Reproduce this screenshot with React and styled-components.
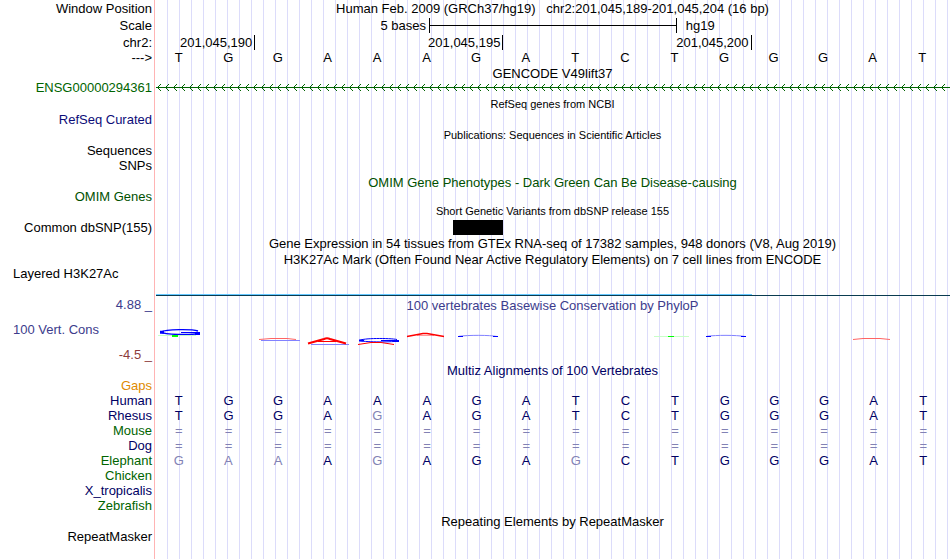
import React from "react";
import styled, { createGlobalStyle } from "styled-components";

const GlobalStyle = createGlobalStyle`
  body {
    margin: 0;
    background: #fff;
  }
`;

const Browser = styled.main`
  display: flex;
  flex-direction: column;
  min-height: 100vh;
  font-family: "Liberation Sans", Arial, Helvetica, sans-serif;
  font-size: 13px;
  line-height: 15px;
  color: #000;
  white-space: nowrap;
  /* left edge of the data area, then a guide line every 12px */
  background:
    linear-gradient(#ffb4b4, #ffb4b4) 154px 0 / 1px 100% no-repeat,
    linear-gradient(#fff, #fff) 0 0 / 156px 100% no-repeat,
    repeating-linear-gradient(
      to right,
      transparent 0 11px,
      #dcdcfa 11px 12px
    );
`;

const Track = styled.section`
  display: grid;
  grid-template-columns: 156px minmax(0, 1fr);
  align-content: center;
  align-items: center;
  height: ${({ $height }) => $height || 16}px;
`;

const Label = styled.div`
  padding-right: 4px;
  text-align: right;
  color: ${({ $color }) => $color || "#000"};
`;

const LeftLabel = styled(Label)`
  padding-left: 13px;
  text-align: left;
`;

const Title = styled.h2`
  grid-column: 2;
  margin: 0;
  padding-right: 1px;
  text-align: center;
  font-weight: normal;
  font-size: ${({ $small }) => ($small ? 11 : 13)}px;
  color: ${({ $color }) => $color || "#000"};
`;

const Position = styled(Title).attrs({ as: "h1" })`
  white-space: pre;
`;

const Scale = styled.div`
  display: grid;
  grid-template-columns: 273px 31.2% 1fr;
  align-items: center;
`;

const ScaleBar = styled.div`
  display: flex;
  align-items: center;
  height: 15px;
  border: solid #000;
  border-width: 0 1px;

  &::before {
    content: "";
    flex: 1;
    height: 1px;
    background: #000;
  }
`;

const ScaleText = styled.span`
  padding: 0 ${({ $end }) => ($end ? 9 : 3)}px;
  text-align: ${({ $end }) => ($end ? "left" : "right")};
`;

const Ruler = styled.div`
  display: grid;
  grid-template-columns: 2fr 5fr 5fr 4fr;
`;

const Tick = styled.span`
  padding-right: 2px;
  text-align: right;
  border-right: 1px solid #000;
`;

const Bases = styled.div`
  display: grid;
  grid-template-columns: repeat(16, 1fr);
  padding-right: 1px;
  text-align: center;

  span {
    padding-right: 4px;
  }
`;

const Drawing = styled.svg`
  display: block;
  width: 100%;
  height: ${({ $height }) => $height}px;
`;

const Variants = styled.div`
  display: grid;
  grid-template-columns: repeat(16, 1fr);
  padding-right: 1px;
`;

const Variant = styled.span`
  grid-column: 7;
  height: 15px;
  background: #000;
`;

const Signal = styled.div`
  display: flex;
  grid-column: 2;
  height: 2px;
  box-sizing: border-box;
  border-bottom: 1px solid #0a3c50;
`;

const SignalTrack = styled(Track)`
  align-content: end;
`;

const SignalArea = styled.div`
  width: 75%;
  background: #64c8ff;
`;

const Conservation = styled.section`
  display: grid;
  grid-template-columns: 156px minmax(0, 1fr);
  height: 67px;
`;

const Axis = styled.div`
  display: flex;
  flex-direction: column;
  gap: 10px;
  padding-top: 1px;
`;

const Plot = styled.div`
  display: flex;
  flex-direction: column;
  gap: 15px;
  padding-top: 2px;
`;

const Alignment = styled.table`
  width: 100%;
  table-layout: fixed;
  border-spacing: 0;
`;

const Species = styled.th`
  width: 152px;
  height: 15px;
  padding: 0 4px 0 0;
  text-align: right;
  font-weight: normal;
  color: ${({ $color }) => $color};
`;

const Base = styled.td`
  padding: 0 4px 0 0;
  text-align: center;
  color: ${({ $match }) => ($match ? "#000064" : "#8282b4")};
`;

const NAVY = "#000064";
const GREEN = "#006400";
const REFERENCE = "TGGAAAGATCTGGGAT";

const alignments = [
  { name: "Gaps", color: "#e08a00", bases: "" },
  { name: "Human", color: NAVY, bases: REFERENCE },
  { name: "Rhesus", color: NAVY, bases: "TGGAGAGATCTGGGAT" },
  { name: "Mouse", color: GREEN, bases: "================" },
  { name: "Dog", color: NAVY, bases: "================" },
  { name: "Elephant", color: GREEN, bases: "GAAAGAGAGCTGGGAT" },
  { name: "Chicken", color: GREEN, bases: "" },
  { name: "X_tropicalis", color: NAVY, bases: "" },
  { name: "Zebrafish", color: GREEN, bases: "" },
];

const GeneArrows = () => (
  <Drawing $height={7} aria-hidden="true">
    <defs>
      <pattern id="intron" width="8" height="7" patternUnits="userSpaceOnUse">
        <path
          d="M4 0h1v1h-1zM3 1h1v1h-1zM2 2h1v1h-1zM1 3h1v1h-1zM2 4h1v1h-1zM3 5h1v1h-1zM4 6h1v1h-1z"
          fill={GREEN}
        />
      </pattern>
    </defs>
    <rect width="100%" height="7" fill="url(#intron)" />
    <rect y="3" width="100%" height="1" fill={GREEN} />
  </Drawing>
);

const PhyloPLogo = () => (
  <Drawing
    $height={20}
    viewBox="0 0 794 20"
    preserveAspectRatio="none"
    fill="none"
    aria-hidden="true"
  >
    <g stroke="#00f">
      <path d="M42 3C36 1 10 1 5 4C8 7 36 7 42 5.5" strokeWidth="1.4" />
      <path d="M25 4.5H44" />
      <path d="M4 4.2H8M39 5.5H44" strokeWidth="3" />
      <path d="M241 11.5C234 10 206 10 204 12.5C206 14 234 14.5 242 13" />
      <path d="M225 12.5H243" />
      <path d="M203 12.5H208M237 13H243" strokeWidth="2" />
    </g>
    <g stroke="#8282ff">
      <path d="M105 12.5H144M155 16.5H193" />
      <path d="M303 8.3C312 7 334 7 341 8.5M551 8.3C560 7 580 7 589 8.5" />
    </g>
    <path d="M302 8.5H307M337 8.5H342M550 8.5H555M585 8.5H590" stroke="#00f" />
    <g stroke="#f00">
      <path d="M152 15.5L168 11C170 10 172 10 174 11L190 15.5" strokeWidth="2" />
      <path d="M162 13.5H180" />
      <path d="M202 16.5L215 14.5H225L238 16.5" />
      <path d="M251 8.5L267 5.5H271L288 8.5" strokeWidth="1.5" />
      <path d="M261 7.5H278" strokeOpacity="0.4" />
    </g>
    <g stroke="#ff6464">
      <path d="M103 11.5L115 10.5H131L140 11.5" />
      <path d="M697 11.5L707 10.5H724L734 11.5" />
    </g>
    <path d="M2 7.5H40M498 8.5H533" stroke="#c8ffc8" />
    <path d="M16 8H22" stroke="#0f0" strokeWidth="2" />
    <path d="M512 8.5H518" stroke="#0f0" />
  </Drawing>
);

const App = () => (
  <>
    <GlobalStyle />
    <Browser>
      <Track>
        <Label>Window Position</Label>
        <Position>
          {"Human Feb. 2009 (GRCh37/hg19)   chr2:201,045,189-201,045,204 (16 bp)"}
        </Position>
      </Track>
      <Track $height={18}>
        <Label>Scale</Label>
        <Scale>
          <ScaleText>5 bases</ScaleText>
          <ScaleBar />
          <ScaleText $end>hg19</ScaleText>
        </Scale>
      </Track>
      <Track>
        <Label>chr2:</Label>
        <Ruler>
          <Tick>201,045,190</Tick>
          <Tick>201,045,195</Tick>
          <Tick>201,045,200</Tick>
        </Ruler>
      </Track>
      <Track $height={15}>
        <Label>{"--->"}</Label>
        <Bases>
          {[...REFERENCE].map((base, index) => (
            <span key={index}>{base}</span>
          ))}
        </Bases>
      </Track>
      <Track>
        <Title>GENCODE V49lift37</Title>
      </Track>
      <Track $height={13}>
        <Label $color={GREEN}>ENSG00000294361</Label>
        <GeneArrows />
      </Track>
      <Track $height={20}>
        <Title $small>RefSeq genes from NCBI</Title>
      </Track>
      <Track $height={10}>
        <Label $color="#0c0c78">RefSeq Curated</Label>
      </Track>
      <Track $height={22}>
        <Title $small>Publications: Sequences in Scientific Articles</Title>
      </Track>
      <Track $height={9}>
        <Label>Sequences</Label>
      </Track>
      <Track $height={20}>
        <Label>SNPs</Label>
      </Track>
      <Track $height={15}>
        <Title $color="#005000">
          OMIM Gene Phenotypes - Dark Green Can Be Disease-causing
        </Title>
      </Track>
      <Track $height={13}>
        <Label $color="#005000">OMIM Genes</Label>
      </Track>
      <Track $height={17}>
        <Title $small>Short Genetic Variants from dbSNP release 155</Title>
      </Track>
      <Track $height={15}>
        <Label>Common dbSNP(155)</Label>
        <Variants>
          <Variant />
        </Variants>
      </Track>
      <Track $height={17}>
        <Title>
          Gene Expression in 54 tissues from GTEx RNA-seq of 17382 samples, 948
          donors (V8, Aug 2019)
        </Title>
      </Track>
      <Track $height={15}>
        <Title>
          H3K27Ac Mark (Often Found Near Active Regulatory Elements) on 7 cell
          lines from ENCODE
        </Title>
      </Track>
      <Track $height={13}>
        <LeftLabel>Layered H3K27Ac</LeftLabel>
      </Track>
      <SignalTrack>
        <Signal>
          <SignalArea />
        </Signal>
      </SignalTrack>
      <Conservation>
        <Axis>
          <Label $color="#3c3c8c">4.88 _</Label>
          <LeftLabel $color="#3c3c8c">100 Vert. Cons</LeftLabel>
          <Label $color="#8c3c3c">-4.5 _</Label>
        </Axis>
        <Plot>
          <Title $color="#3c3c8c">
            100 vertebrates Basewise Conservation by PhyloP
          </Title>
          <PhyloPLogo />
        </Plot>
      </Conservation>
      <Track $height={15}>
        <Title $color={NAVY}>Multiz Alignments of 100 Vertebrates</Title>
      </Track>
      <Alignment>
        <tbody>
          {alignments.map(({ name, color, bases }) => (
            <tr key={name}>
              <Species scope="row" $color={color}>
                {name}
              </Species>
              {[...bases.padEnd(16)].map((base, index) => (
                <Base key={index} $match={base === REFERENCE[index]}>
                  {base}
                </Base>
              ))}
            </tr>
          ))}
        </tbody>
      </Alignment>
      <Track>
        <Title>Repeating Elements by RepeatMasker</Title>
      </Track>
      <Track $height={14}>
        <Label>RepeatMasker</Label>
      </Track>
    </Browser>
  </>
);

export default App;
